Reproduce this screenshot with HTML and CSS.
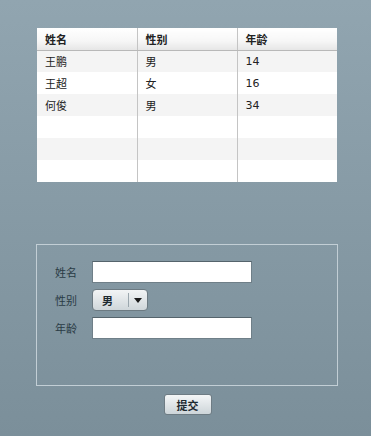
FILE: index.html
```html
<!DOCTYPE html>
<html lang="zh-CN">
<head>
    <meta charset="UTF-8">
    <title>人员信息</title>
    <link rel="stylesheet" href="styles.css">
</head>
<body>
    <div class="page">
        <table class="grid">
            <thead>
                <tr><th>姓名</th><th>性别</th><th>年龄</th></tr>
            </thead>
            <tbody>
                <tr><td>王鹏</td><td>男</td><td>14</td></tr>
                <tr><td>王超</td><td>女</td><td>16</td></tr>
                <tr><td>何俊</td><td>男</td><td>34</td></tr>
                <tr><td></td><td></td><td></td></tr>
                <tr><td></td><td></td><td></td></tr>
                <tr><td></td><td></td><td></td></tr>
            </tbody>
        </table>

        <div class="form-box">
            <div class="form-grid">
                <label for="name">姓名</label>
                <input id="name" type="text">
                <label>性别</label>
                <div class="combo">
                    <span class="combo-value">男</span>
                    <span class="combo-arrow"></span>
                </div>
                <label for="age">年龄</label>
                <input id="age" type="text">
            </div>
        </div>

        <div class="actions">
            <button class="submit">提交</button>
        </div>
    </div>
</body>
</html>
```

FILE: styles.css
```css
html, body {
    margin: 0;
    height: 100%;
}
body {
    background: linear-gradient(#91a5b0, #7b8f9a);
    font-family: "DejaVu Sans", "Noto Sans CJK SC", sans-serif;
    font-size: 11px;
    color: #222;
}
.page {
    padding-top: 28px;
    padding-left: 37px;
    width: 301px;
}
.grid {
    width: 300px;
    border-collapse: collapse;
    background: #fff;
    table-layout: fixed;
}
.grid th,
.grid td {
    height: 22px;
    padding: 0 0 0 8px;
    text-align: left;
    border-left: 1px solid #c4c4c4;
    box-sizing: border-box;
}
.grid th:first-child,
.grid td:first-child {
    border-left: none;
}
.grid th {
    font-weight: bold;
    background: linear-gradient(#ffffff, #f6f6f6 60%, #e6e6e6);
    border-bottom: 1px solid #b8b8b8;
}
.grid tbody tr:nth-child(odd) td {
    background: #f4f4f4;
}
.grid tbody tr:nth-child(even) td {
    background: #fff;
}
.form-box {
    margin: 62px 0 0 -1px;
    height: 142px;
    box-sizing: border-box;
    border: 1px solid #c2ced5;
    padding: 16px 0 0 18px;
}
.form-grid {
    display: grid;
    grid-template-columns: 37px 160px;
    grid-auto-rows: 22px;
    row-gap: 6px;
    align-items: center;
}
.form-grid label {
    color: #2a3b45;
}
.form-grid input {
    width: 160px;
    height: 22px;
    box-sizing: border-box;
    border: 1px solid #6f7f88;
    border-top-color: #55646c;
    background: #fff;
    margin: 0;
}
.combo {
    width: 56px;
    height: 22px;
    box-sizing: border-box;
    display: flex;
    align-items: center;
    border: 1px solid #6c7a82;
    border-radius: 4px;
    background: linear-gradient(#f2f4f5, #cfd6da);
}
.combo-value {
    flex: 1;
    padding-left: 9px;
    font-weight: bold;
    color: #1d2a31;
}
.combo-arrow {
    width: 18px;
    height: 14px;
    border-left: 1px solid #9aa6ad;
    position: relative;
}
.combo-arrow::after {
    content: "";
    position: absolute;
    left: 5px;
    top: 5px;
    border-left: 4px solid transparent;
    border-right: 4px solid transparent;
    border-top: 5px solid #1a1a1a;
}
.actions {
    display: flex;
    justify-content: center;
    padding-top: 8px;
}
.submit {
    width: 48px;
    height: 21px;
    padding: 0;
    border: 1px solid #6e7c84;
    border-radius: 3px;
    background: linear-gradient(#f4f6f7, #cdd5d9);
    font-family: "Noto Sans CJK SC", sans-serif;
    font-size: 11px;
    font-weight: bold;
    color: #1d2a31;
}
```
